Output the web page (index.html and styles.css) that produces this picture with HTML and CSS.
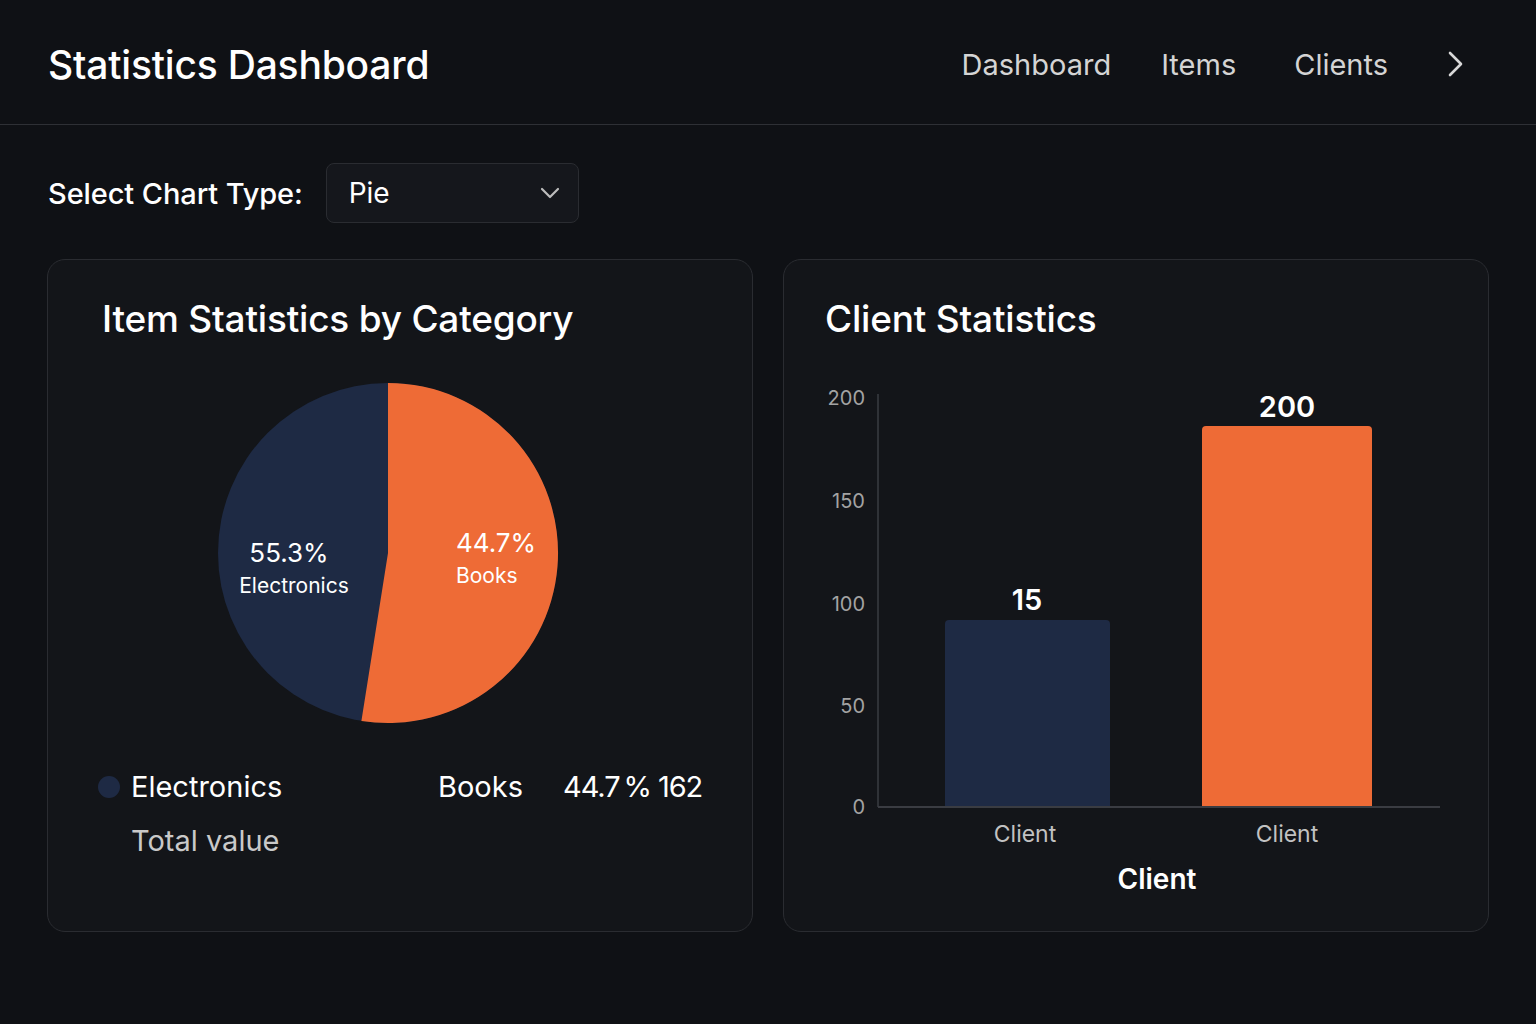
FILE: index.html
```html
<!DOCTYPE html>
<html lang="en">
<head>
<meta charset="utf-8">
<title>Statistics Dashboard</title>
<link rel="stylesheet" href="styles.css">
</head>
<body>
<header class="topbar">
  <h1 class="brand">Statistics Dashboard</h1>
  <nav class="nav">
    <a class="nav-link nav-dash" href="#">Dashboard</a>
    <a class="nav-link nav-items" href="#">Items</a>
    <a class="nav-link nav-clients" href="#">Clients</a>
    <span class="nav-more">
      <svg width="16" height="26" viewBox="0 0 16 26"><path d="M2 2 L13 13 L2 24" fill="none" stroke="#d8d8d8" stroke-width="2.6" stroke-linecap="round" stroke-linejoin="round"/></svg>
    </span>
  </nav>
</header>
<main class="main">
  <div class="controls">
    <label class="control-label">Select Chart Type:</label>
    <div class="select">
      <span class="select-value">Pie</span>
      <svg class="select-caret" width="20" height="12" viewBox="0 0 20 12"><path d="M2 2 L10 10 L18 2" fill="none" stroke="#bdbdbd" stroke-width="2.2" stroke-linecap="round" stroke-linejoin="round"/></svg>
    </div>
  </div>
  <div class="cards">
    <section class="card card-items">
      <h2 class="card-title">Item Statistics by Category</h2>
      <svg class="pie" width="342" height="342" viewBox="0 0 342 342">
        <circle cx="171" cy="171" r="170" fill="#1e2a44"/>
        <path d="M171 171 L171 1 A170 170 0 1 1 144.4 338.9 Z" fill="#ee6b36"/>
        <text x="72" y="180" class="pie-pct" text-anchor="middle">55.3%</text>
        <text x="77" y="211" class="pie-name" text-anchor="middle">Electronics</text>
        <text x="239" y="170" class="pie-pct">44.7%</text>
        <text x="239" y="201" class="pie-name">Books</text>
      </svg>
      <div class="legend">
        <div class="legend-item"><span class="dot"></span>Electronics</div>
        <div class="legend-books">Books</div>
        <div class="legend-value">44.7&#8201;% 162</div>
        <div class="legend-sub">Total value</div>
      </div>
    </section>
    <section class="card card-clients">
      <h2 class="card-title">Client Statistics</h2>
      <svg class="bars" width="625" height="520" viewBox="0 0 625 520">
        <g class="tick-labels">
          <text x="45" y="24" text-anchor="end">200</text>
          <text x="45" y="127" text-anchor="end">150</text>
          <text x="45" y="230" text-anchor="end">100</text>
          <text x="45" y="332" text-anchor="end">50</text>
          <text x="45" y="433" text-anchor="end">0</text>
        </g>
        <path d="M125 426 V243 Q125 239 129 239 H286 Q290 239 290 243 V426 Z" fill="#1e2a44"/>
        <path d="M382 426 V49 Q382 45 386 45 H548 Q552 45 552 49 V426 Z" fill="#ee6b36"/>
        <line x1="58" y1="13" x2="58" y2="426" stroke="#3a3c42" stroke-width="1.5"/>
        <line x1="58" y1="426" x2="620" y2="426" stroke="#3a3c42" stroke-width="2"/>
        <text x="207" y="229" class="bar-value" text-anchor="middle">15</text>
        <text x="467" y="36" class="bar-value" text-anchor="middle">200</text>
        <text x="205" y="461" class="x-label" text-anchor="middle">Client</text>
        <text x="467" y="461" class="x-label" text-anchor="middle">Client</text>
        <text x="337" y="508" class="x-title" text-anchor="middle">Client</text>
      </svg>
    </section>
  </div>
</main>
</body>
</html>
```
FILE: styles.css
```css
* { box-sizing: border-box; }
html, body { margin: 0; padding: 0; }
body {
  background: #0f1115;
  color: #f2f2f2;
  font-family: Inter, "Noto Sans", "Liberation Sans", sans-serif;
  width: 1536px;
  height: 1024px;
  overflow: hidden;
}
.topbar {
  height: 125px;
  border-bottom: 1px solid #2e3035;
  display: flex;
  align-items: center;
  justify-content: space-between;
  padding: 4px 72px 0 48px;
}
.brand {
  margin: 0;
  font-size: 39px;
  font-weight: 500;
  letter-spacing: -0.2px;
  color: #ffffff;
}
.nav { display: flex; align-items: center; }
.nav-link {
  color: #d4d4d4;
  text-decoration: none;
  font-size: 29px;
  font-weight: 400;
}
.nav-items { margin-left: 50px; }
.nav-clients { margin-left: 58px; }
.nav-more { margin-left: 60px; display: flex; align-items: center; }
.main { padding: 38px 47px 0 47px; }
.controls { display: flex; align-items: center; height: 60px; }
.control-label {
  font-size: 29px;
  font-weight: 500;
  color: #ffffff;
  margin-left: 1px;
  letter-spacing: -0.1px;
}
.select {
  margin-left: 23px;
  width: 253px;
  height: 60px;
  border: 1px solid #2a2c31;
  border-radius: 8px;
  background: #15171c;
  display: flex;
  align-items: center;
  justify-content: space-between;
  padding: 0 18px 0 22px;
}
.select-value { font-size: 28px; color: #ffffff; }
.cards {
  margin-top: 36px;
  display: grid;
  grid-template-columns: 706px 706px;
  gap: 30px;
}
.card {
  height: 673px;
  border: 1.5px solid #2a2c31;
  border-radius: 18px;
  background: #131519;
  padding: 36px 54px;
}
.card-clients { padding-left: 41px; padding-right: 30px; }
.card-title {
  margin: 0;
  font-size: 37px;
  line-height: 46px;
  font-weight: 500;
  color: #ffffff;
  letter-spacing: -0.2px;
}
.pie { display: block; margin: 40px 0 0 115px; }
.pie-pct { font-size: 26px; fill: #ffffff; font-family: Inter, "Noto Sans", sans-serif; }
.pie-name { font-size: 21px; fill: #ffffff; font-family: Inter, "Noto Sans", sans-serif; }
.legend {
  margin: 45px 0 0 -4px;
  display: grid;
  grid-template-columns: 340px 125px auto;
  column-gap: 0;
  justify-content: start;
  row-gap: 18px;
  font-size: 29px;
  line-height: 36px;
  white-space: nowrap;
}
.legend-item { display: flex; align-items: center; color: #ffffff; }
.dot {
  width: 22px;
  height: 22px;
  border-radius: 50%;
  background: #1e2a44;
  margin-right: 11px;
}
.legend-books { color: #ffffff; }
.legend-value { color: #ffffff; letter-spacing: -1.1px; }
.legend-sub { grid-column: 1; padding-left: 33px; color: #c9c9c9; }
.bars { display: block; margin: 39px 0 0 -5px; overflow: visible; }
.tick-labels text { font-size: 20px; fill: #a3a3a3; font-family: Inter, "Noto Sans", sans-serif; }
.bar-value { font-size: 29px; font-weight: 600; fill: #ffffff; font-family: Inter, "Noto Sans", sans-serif; }
.x-label { font-size: 23px; fill: #c2c2c2; font-family: Inter, "Noto Sans", sans-serif; }
.x-title { font-size: 28px; font-weight: 600; fill: #ffffff; font-family: Inter, "Noto Sans", sans-serif; }
```
